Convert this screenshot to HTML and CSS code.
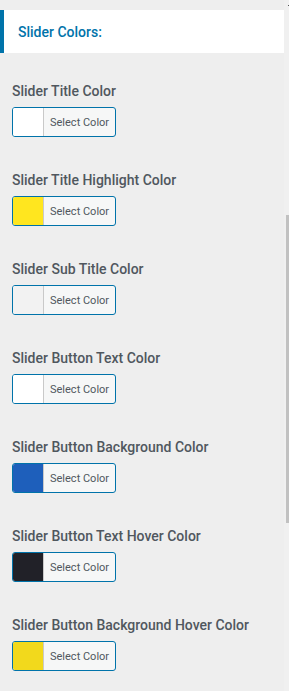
FILE: index.html
```html
<!DOCTYPE html>
<html>
<head>
  <meta name="viewport" content="width=device-width, initial-scale=1">
  <link rel="stylesheet" href="styles.css">
</head>
<body>
  <div class="panel">
    <div class="section">
      <h3 class="section-title">Slider Colors:</h3>
      <div class="controls">
        <div class="control">
          <label class="control-label">Slider Title Color</label>
          <button class="color-btn"><span class="swatch" style="background:#ffffff"></span><span class="btn-text">Select Color</span></button>
        </div>
        <div class="control">
          <label class="control-label">Slider Title Highlight Color</label>
          <button class="color-btn"><span class="swatch" style="background:#ffe61f"></span><span class="btn-text">Select Color</span></button>
        </div>
        <div class="control">
          <label class="control-label">Slider Sub Title Color</label>
          <button class="color-btn"><span class="swatch" style="background:#f2f2f2"></span><span class="btn-text">Select Color</span></button>
        </div>
        <div class="control">
          <label class="control-label">Slider Button Text Color</label>
          <button class="color-btn"><span class="swatch" style="background:#ffffff"></span><span class="btn-text">Select Color</span></button>
        </div>
        <div class="control">
          <label class="control-label">Slider Button Background Color</label>
          <button class="color-btn"><span class="swatch" style="background:#1e5fbb"></span><span class="btn-text">Select Color</span></button>
        </div>
        <div class="control">
          <label class="control-label">Slider Button Text Hover Color</label>
          <button class="color-btn"><span class="swatch" style="background:#212128"></span><span class="btn-text">Select Color</span></button>
        </div>
        <div class="control">
          <label class="control-label">Slider Button Background Hover Color</label>
          <button class="color-btn"><span class="swatch" style="background:#f2d91c"></span><span class="btn-text">Select Color</span></button>
        </div>
      </div>
    </div>
    <div class="scroll-track">
      <span class="scroll-dot"></span>
      <div class="scroll-thumb"></div>
    </div>
  </div>
</body>
</html>
```

FILE: styles.css
```css
body {
  font-family: Roboto, "Liberation Sans", Arial, sans-serif;
  margin: 0;
  padding: 0;
  background: #eeeeee;
}
.panel {
  display: flex;
  width: 289px;
  height: 691px;
  overflow: hidden;
}
.section {
  width: 284px;
  flex-shrink: 0;
}
.section-title {
  margin: 10px 0 0 0;
  height: 43px;
  box-sizing: border-box;
  background: #ffffff;
  border-left: 4px solid #0073aa;
  padding-left: 14px;
  display: flex;
  align-items: center;
  font-size: 14px;
  font-weight: 500;
  color: #0073aa;
}
.controls {
  padding: 29px 0 0 12px;
  display: flex;
  flex-direction: column;
  gap: 34px;
}
.control {
  display: flex;
  flex-direction: column;
  align-items: flex-start;
  gap: 7px;
}
.control-label {
  font-size: 14px;
  line-height: 18px;
  font-weight: 500;
  color: #50575e;
}
.color-btn {
  display: flex;
  align-items: stretch;
  width: 104px;
  height: 30px;
  padding: 0;
  border: 1px solid #0073aa;
  border-radius: 3px;
  background: #f6f7f7;
  overflow: hidden;
  cursor: pointer;
  font-family: inherit;
}
.swatch {
  width: 30px;
  border-right: 1px solid #c9c9c9;
}
.btn-text {
  display: flex;
  align-items: center;
  padding-left: 6px;
  font-size: 11px;
  color: #50575e;
}
.scroll-track {
  flex: 1;
  background: #f0f0f0;
  position: relative;
}
.scroll-dot {
  position: absolute;
  left: 4px;
  top: 5px;
  width: 1px;
  height: 1px;
  background: #555;
}
.scroll-thumb {
  position: absolute;
  left: 2px;
  top: 215px;
  width: 3px;
  height: 308px;
  background: #c1c1c1;
}
```
